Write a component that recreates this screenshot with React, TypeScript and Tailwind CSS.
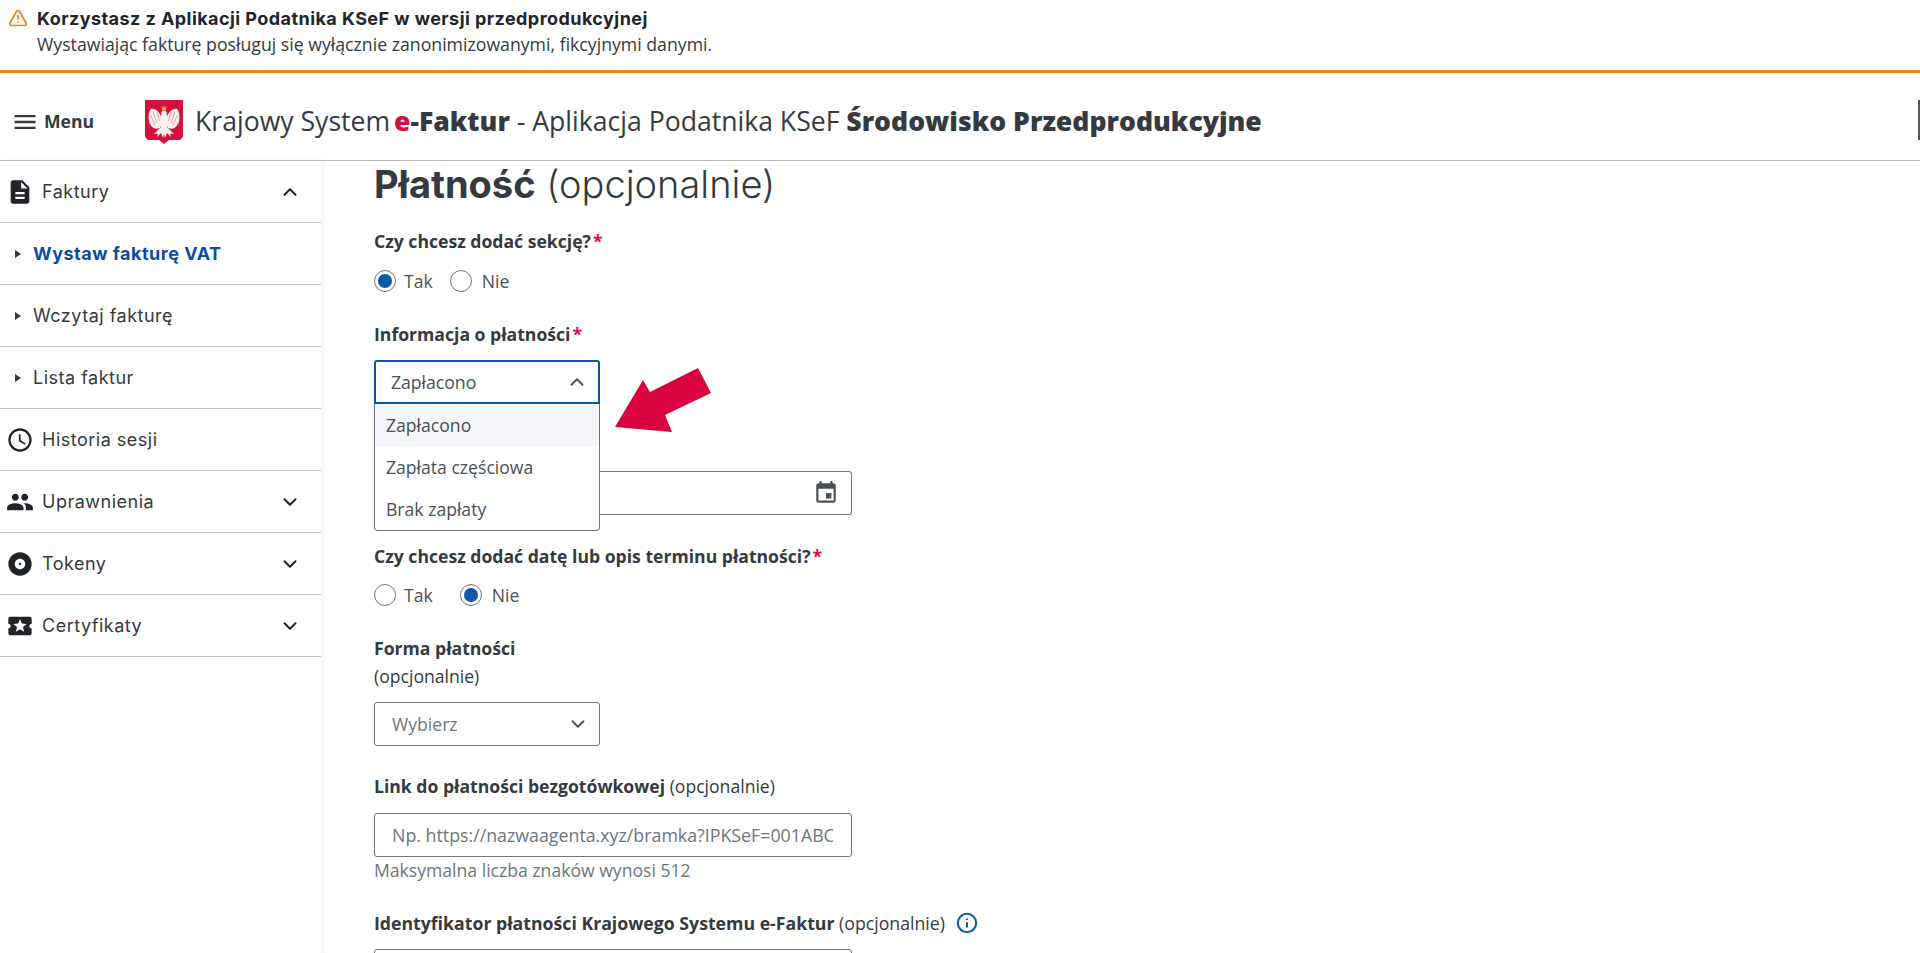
import { ChevronUp, ChevronDown, TriangleAlert, Info } from 'lucide-react'

const sans = "font-['Open_Sans','Noto_Sans',sans-serif]"

// Montserrat is not available, Inter is the nearest wide geometric face
const nav = "font-['Inter','Noto_Sans',sans-serif]"

function Eagle() {
  return (
    <svg viewBox="0 0 38 44" className="h-[44px] w-[38px] shrink-0">
      <path d="M0 0 H38 V35 C38 38 36 40 33 40 H24 L19 44 L14 40 H5 C2 40 0 38 0 35 Z" fill="#d4103c" />
      <path d="M17 19 C15 13 11 8 6 9 C3 12 3 20 5 24 C7 28 11 30 15 28 Z" fill="#f4f1ee" />
      <path d="M21 19 C23 13 27 8 32 9 C35 12 35 20 33 24 C31 28 27 30 23 28 Z" fill="#f4f1ee" />
      <ellipse cx="19" cy="22" rx="4.500" ry="9" fill="#f4f1ee" />
      <circle cx="19" cy="13.500" r="2.800" fill="#f4f1ee" />
      <path d="M15 28 L9 34 L13 33.500 L12 37 L16 33 L18 38 L19 34 L20 38 L22 33 L26 37 L25 33.500 L29 34 L23 28 Z" fill="#f4f1ee" />
      <path d="M16.500 6 L18 8 L19 5.500 L20 8 L21.500 6 L21 10.500 H17 Z" fill="#e8b84a" />
      <path d="M8 12 L12 23 M5.500 15 L10 25 M12 12 L14.500 21 M30 12 L26 23 M32.500 15 L28 25 M26 12 L23.500 21" stroke="#d4103c" strokeWidth="0.700" fill="none" opacity="0.500" />
    </svg>
  )
}

function MenuIcon() {
  return (
    <svg viewBox="0 0 24 24" className="h-[28px] w-[28px]" fill="#343a40">
      <path d="M3 18h18v-2H3v2zm0-5h18v-2H3v2zm0-7v2h18V6H3z" />
    </svg>
  )
}

function DocIcon() {
  return (
    <svg viewBox="0 0 24 24" className="h-[28px] w-[28px]" fill="#212529">
      <path d="M14 2H6c-1.100 0-2 .9-2 2v16c0 1.100.9 2 2 2h12c1.100 0 2-.9 2-2V8l-6-6zm2 16H8v-2h8v2zm0-4H8v-2h8v2zm-3-5V3.500L18.500 9H13z" />
    </svg>
  )
}

function ClockIcon() {
  return (
    <svg viewBox="0 0 24 24" className="h-[28px] w-[28px]" fill="#212529">
      <path d="M11.990 2C6.470 2 2 6.480 2 12s4.470 10 9.990 10C17.520 22 22 17.520 22 12S17.520 2 11.990 2zM12 20c-4.420 0-8-3.580-8-8s3.580-8 8-8 8 3.580 8 8-3.580 8-8 8zm.5-13H11v6l5.250 3.150.75-1.230-4.500-2.670z" />
    </svg>
  )
}

function PeopleIcon() {
  return (
    <svg viewBox="0 0 24 24" className="h-[28px] w-[28px]" fill="#212529">
      <path d="M16 11c1.660 0 2.990-1.340 2.990-3S17.660 5 16 5s-3 1.340-3 3 1.340 3 3 3zm-8 0c1.660 0 2.990-1.340 2.990-3S9.660 5 8 5 5 6.340 5 8s1.340 3 3 3zm0 2c-2.330 0-7 1.170-7 3.500V19h14v-2.500C15 14.170 10.330 13 8 13zm8 0c-.29 0-.62.02-.97.05 1.160.84 1.970 1.970 1.970 3.450V19h6v-2.500c0-2.330-4.670-3.500-7-3.500z" />
    </svg>
  )
}

function DiscIcon() {
  return (
    <svg viewBox="0 0 24 24" className="h-[28px] w-[28px]" fill="#212529">
      <path d="M12 2C6.480 2 2 6.480 2 12s4.480 10 10 10 10-4.480 10-10S17.520 2 12 2zm0 14.500c-2.490 0-4.500-2.010-4.500-4.500S9.510 7.500 12 7.500s4.500 2.010 4.500 4.500-2.010 4.500-4.500 4.500zm0-5.500c-.55 0-1 .45-1 1s.45 1 1 1 1-.45 1-1-.45-1-1-1z" />
    </svg>
  )
}

function TicketIcon() {
  return (
    <svg viewBox="0 0 24 24" className="h-[28px] w-[28px]" fill="#212529">
      <path d="M22 10V6a2 2 0 0 0-2-2H4a2 2 0 0 0-2 2v4c1.100 0 2 .9 2 2s-.9 2-2 2v4c0 1.100.9 2 2 2h16c1.100 0 2-.9 2-2v-4c-1.100 0-2-.9-2-2s.9-2 2-2zm-6.420 7L12 14.700 8.420 17l1.080-4.120-3.290-2.690 4.240-.25L12 6l1.540 3.950 4.250.25-3.290 2.690L15.580 17z" />
    </svg>
  )
}

function CalendarIcon() {
  return (
    <svg viewBox="0 0 24 24" className="h-[26px] w-[26px]" fill="#495057">
      <path d="M19 3h-1V1h-2v2H8V1H6v2H5c-1.110 0-2 .9-2 2v14c0 1.100.89 2 2 2h14c1.100 0 2-.9 2-2V5c0-1.100-.9-2-2-2zm0 16H5V8h14v11zm-2-7h-5v5h5v-5z" />
    </svg>
  )
}

function NavRow({ icon, label, open, closed }: { icon: React.ReactNode; label: string; open?: boolean; closed?: boolean }) {
  return (
    <div className="flex h-[62px] items-center border-b border-[#c4c4c4] pl-[5px] pr-[20px] text-[#343a40]">
      <span className="flex w-[30px] items-center justify-center">{icon}</span>
      <span className="ml-[7px] flex-1 text-[18px] tracking-[0.5px]">{label}</span>
      {open && <ChevronUp className="h-[22px] w-[22px] text-[#212529]" strokeWidth={2.2} />}
      {closed && <ChevronDown className="h-[22px] w-[22px] text-[#212529]" strokeWidth={2.2} />}
    </div>
  )
}

function SubRow({ label, active }: { label: string; active?: boolean }) {
  return (
    <div className="flex h-[62px] items-center border-b border-[#c4c4c4] pl-[15px]">
      <span className="h-0 w-0 border-y-[4px] border-l-[6px] border-y-transparent border-l-[#343a40]" />
      <span className={active ? 'ml-[12px] text-[18px] font-bold tracking-[0.5px] text-[#0b4da2]' : 'ml-[12px] text-[18px] tracking-[0.5px] text-[#343a40]'}>{label}</span>
    </div>
  )
}

function Radio({ label, checked, wide }: { label: string; checked?: boolean; wide?: boolean }) {
  return (
    <div className={wide ? 'flex items-center gap-[10px]' : 'flex items-center gap-[8px]'}>
      <span className="flex h-[22px] w-[22px] items-center justify-center rounded-full border border-[#6c757d] bg-white">
        {checked && <span className="h-[14px] w-[14px] rounded-full bg-[#0b57a8]" />}
      </span>
      <span className="text-[17.6px] text-[#495057]">{label}</span>
    </div>
  )
}

function Required() {
  return <span className="ml-[2px] text-[#d4103c]">*</span>
}

export default function App() {
  return (
    <div className={`h-[953px] w-[1920px] overflow-hidden bg-white ${sans}`}>
      <div className="h-[73px] border-b-[3px] border-[#ea8511] pl-[8px] pt-[6px]">
        <div className="flex h-[24px] items-center gap-[9px]">
          <TriangleAlert className="h-[20px] w-[20px] text-[#ea8511]" strokeWidth={2} />
          <span className={`text-[18px] font-bold tracking-[0.44px] text-[#212529] ${nav}`}>Korzystasz z Aplikacji Podatnika KSeF w wersji przedprodukcyjnej</span>
        </div>
        <div className="mt-[2px] pl-[29px] text-[17.7px] leading-[24px] text-[#343a40]">Wystawiając fakturę posługuj się wyłącznie zanonimizowanymi, fikcyjnymi danymi.</div>
      </div>

      <header className="relative flex h-[88px] items-center border-b border-[#bdbdbd] pl-[11px] pt-[10px]">
        <MenuIcon />
        <span className="ml-[5px] w-[101px] text-[17.6px] font-bold text-[#343a40]">Menu</span>
        <Eagle />
        <span className="ml-[12px] whitespace-nowrap text-[26.6px] text-[#343a40]">
          Krajowy System <span className="ml-[-3px] font-extrabold"><span className="text-[#d4103c]">e</span>-Faktur</span> - Aplikacja Podatnika KSeF <span className="font-extrabold">Środowisko Przedprodukcyjne</span>
        </span>
        <span className="absolute right-0 top-[27px] h-[40px] w-[2px] bg-[#5a5a5a]" />
      </header>

      <div className="flex h-[792px]">
        <aside className={`h-full w-[321px] shrink-0 shadow-[3px_0_6px_rgba(0,0,0,0.05)] ${nav}`}>
          <NavRow icon={<DocIcon />} label="Faktury" open />
          <SubRow label="Wystaw fakturę VAT" active />
          <SubRow label="Wczytaj fakturę" />
          <SubRow label="Lista faktur" />
          <NavRow icon={<ClockIcon />} label="Historia sesji" />
          <NavRow icon={<PeopleIcon />} label="Uprawnienia" closed />
          <NavRow icon={<DiscIcon />} label="Tokeny" closed />
          <NavRow icon={<TicketIcon />} label="Certyfikaty" closed />
        </aside>

        <main className="relative flex-1 overflow-hidden pl-[53px] text-[#343a40]">
          <h1 className={`mt-[1px] h-[44px] text-[38px] font-light leading-[44px] text-[#343a40] ${nav}`}>
            <span className="font-bold">Płatność</span> (opcjonalnie)
          </h1>

          <div className="mt-[23px] text-[17.6px] font-bold leading-[24px]">Czy chcesz dodać sekcję?<Required /></div>
          <div className="mt-[16px] flex h-[24px] items-center gap-[17px]">
            <Radio label="Tak" checked />
            <Radio label="Nie" wide />
          </div>

          <div className="mt-[29px] text-[17.6px] font-bold leading-[24px]">Informacja o płatności<Required /></div>

          <div className="relative mt-[14px] h-[155px]">
            <div className="flex h-[44px] w-[226px] items-center justify-between rounded-t-[3px] border-2 border-[#0b57a8] pl-[15px] pr-[10px] text-[17.6px] text-[#495057]">
              Zapłacono
              <ChevronUp className="h-[22px] w-[22px] text-[#495057]" strokeWidth={2} />
            </div>
            <div className="absolute left-[226px] top-[111px] flex h-[44px] w-[252px] items-center justify-end rounded-r-[3px] border border-l-0 border-[#6c757d] pr-[12px]">
              <CalendarIcon />
            </div>
            <div className="absolute left-0 top-[44px] z-10 w-[226px] rounded-b-[4px] border border-t-0 border-[#6c757d] bg-white text-[17.6px] text-[#495057]">
              <div className="flex h-[42px] items-center bg-[#f4f6f9] pl-[11px]">Zapłacono</div>
              <div className="flex h-[42px] items-center pl-[11px]">Zapłata częściowa</div>
              <div className="flex h-[42px] items-center pl-[11px]">Brak zapłaty</div>
            </div>
            <svg viewBox="0 0 100 70" className="absolute left-[241px] top-[7px] h-[70px] w-[100px]">
              <path d="M0 60 L28 13 L35 25 L83 1 L96 26 L50 48 L57 65 Z" fill="#d9043f" />
            </svg>
          </div>

          <div className="mt-[29px] text-[17.6px] font-bold leading-[24px]">Czy chcesz dodać datę lub opis terminu płatności?<Required /></div>
          <div className="mt-[15px] flex h-[24px] items-center gap-[27px]">
            <Radio label="Tak" />
            <Radio label="Nie" checked wide />
          </div>

          <div className="mt-[29px] text-[17.6px] font-bold leading-[24px]">Forma płatności</div>
          <div className="mt-[4px] text-[17.6px] leading-[24px]">(opcjonalnie)</div>
          <div className="mt-[14px] flex h-[44px] w-[226px] items-center justify-between rounded-[3px] border border-[#6c757d] pl-[17px] pr-[10px] text-[17.6px] text-[#6c757d]">
            Wybierz
            <ChevronDown className="h-[22px] w-[22px] text-[#495057]" strokeWidth={2} />
          </div>

          <div className="mt-[28px] text-[17.6px] leading-[24px]"><span className="font-bold">Link do płatności bezgotówkowej</span> (opcjonalnie)</div>
          <input
            readOnly
            placeholder="Np. https://nazwaagenta.xyz/bramka?IPKSeF=001ABCDEF"
            className="mt-[15px] block h-[44px] w-[478px] rounded-[3px] border border-[#6c757d] pl-[17px] pr-[18px] text-[17.8px] placeholder:text-[#6c757d]"
          />
          <div className="mt-[1px] text-[17.6px] leading-[24px] text-[#6c757d]">Maksymalna liczba znaków wynosi 512</div>

          <div className="mt-[29px] flex items-center gap-[11px] text-[17.7px] leading-[24px]">
            <span><span className="font-bold">Identyfikator płatności Krajowego Systemu e-Faktur</span> (opcjonalnie)</span>
            <Info className="h-[22px] w-[22px] text-[#0b57a8]" strokeWidth={2.2} />
          </div>
          <div className="mt-[14px] h-[44px] w-[478px] rounded-[3px] border border-[#6c757d]" />
        </main>
      </div>
    </div>
  )
}
